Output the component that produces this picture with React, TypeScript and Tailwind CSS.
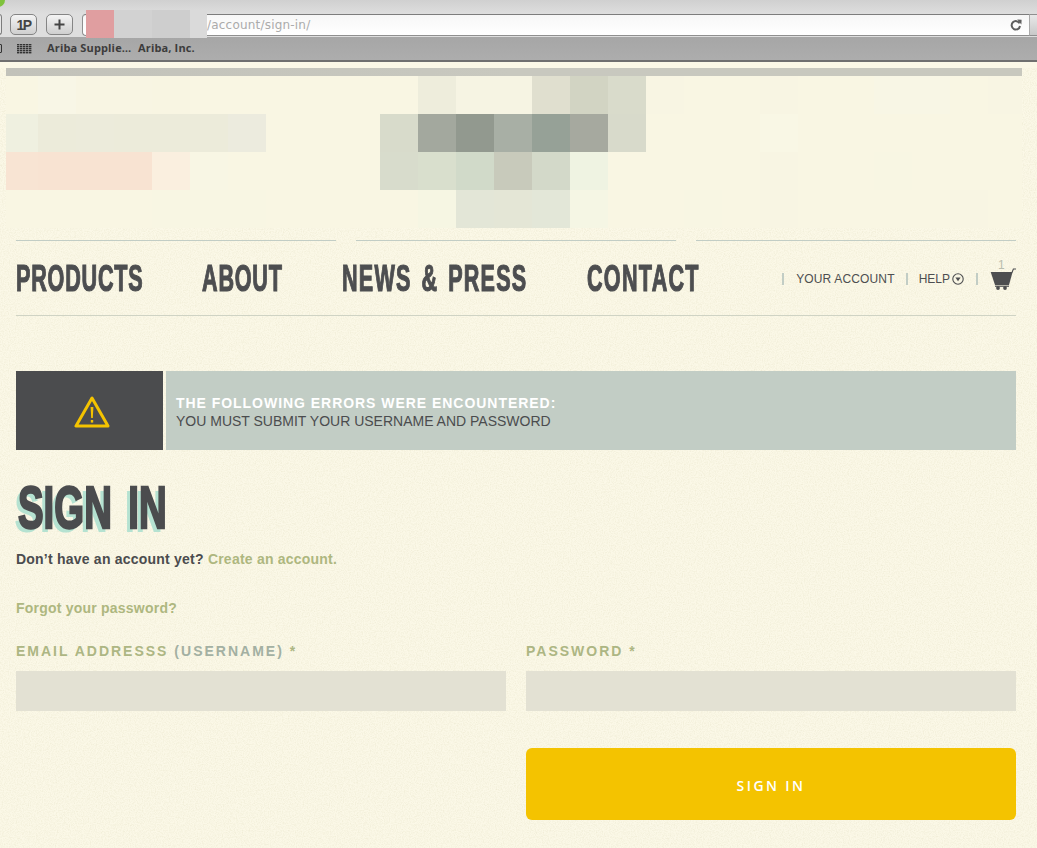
import React from "react";

const sans = "font-['Liberation_Sans',Arial,sans-serif]";
const base = "#f9f6e3";

// blurred header image, one row of 38px cells each (index = column)
const mosaic: Record<number, string>[] = [
    { 1: "#f8f6e6", 2: "#f8f5e3", 3: "#f8f5e3", 4: "#f8f5e2", 11: "#eeeddc", 12: "#f6f4e3", 13: "#f6f4e3", 14: "#e0dfcf", 15: "#d2d4c3", 16: "#d9dbcb", 17: "#f8f5e3", 20: "#f8f5e3", 23: "#f8f6e5", 24: "#f8f6e5", 26: "#f8f5e3" },
    { 0: "#eff0e0", 1: "#ecebda", 2: "#ecebdb", 3: "#ecebda", 4: "#ecebda", 5: "#ecebda", 6: "#ecebde", 10: "#d8dbcb", 11: "#a3a89e", 12: "#92998f", 13: "#a8afa5", 14: "#96a197", 15: "#a6a99f", 16: "#d8dacb", 20: "#f9f7e5" },
    { 0: "#f8e4d3", 1: "#f8e3d2", 2: "#f8e3d2", 3: "#f8e3d2", 4: "#faefdf", 5: "#f8f6e4", 10: "#d8dccc", 11: "#d9dfcd", 12: "#d1dac9", 13: "#c8cabb", 14: "#d3d9c9", 15: "#eff3e2", 20: "#f8f5e3", 23: "#f8f6e3" },
    { 4: "#f8f6e3", 5: "#f8f6e3", 6: "#f8f6e3", 11: "#f6f6e3", 12: "#e3e6d7", 13: "#e4e6d6", 14: "#e3e7d8", 15: "#f5f6e4", 18: "#f8f6e3", 20: "#f8f5e3", 25: "#f8f5e3" },
];

const navItems = [
    { label: "PRODUCTS", className: "w-[127px] tracking-[1.3px]" },
    { label: "ABOUT", className: "w-[81px] tracking-[1.3px]" },
    { label: "NEWS & PRESS", className: "w-[186px] tracking-[2px] [word-spacing:4.5px]" },
    { label: "CONTACT", className: "w-[113px] tracking-[2.1px]" },
];

function Separator() {
    return <span className="block w-[2px] h-[12px] bg-[#c2cdc5]" />;
}

function Browser() {
    return (
        <div className="relative h-[62px] overflow-hidden border-b-2 border-[#6f6f6f]">
            <div className="absolute left-[-9px] top-[-7px] w-[14px] h-[14px] rounded-full bg-[#7fc23c]" />
            <div className="h-[14px] bg-gradient-to-b from-[#d0d0d0] to-[#dedede]" />
            <div className="flex h-[23px] bg-[#dedede]">
                <div className="w-[3px] h-[21px] -ml-[1px] rounded-r-[3px] border border-[#7d7d7d] bg-[#e6e6e6]" />
                <div className="ml-[8px] w-[27px] h-[21px] flex items-center justify-center rounded-[5px] border border-[#858585] bg-gradient-to-b from-[#f4f4f4] to-[#cfcfcf] text-[14px] leading-none font-bold text-[#444] font-['Liberation_Sans',sans-serif] tracking-[-1.5px]">
                    1P
                </div>
                <div className="ml-[9px] w-[27px] h-[21px] flex items-center justify-center rounded-[5px] border border-[#858585] bg-gradient-to-b from-[#f4f4f4] to-[#cfcfcf]">
                    <svg width="11" height="11" viewBox="0 0 11 11"><path d="M5.5 0.5v10M0.5 5.5h10" stroke="#444" strokeWidth="2" /></svg>
                </div>
                <div className="ml-[9px] flex-1 h-[22px] flex items-center justify-between pl-[124px] pr-[7px] rounded-l-[4px] border-y border-l border-t-[#7d7d7d] border-b-[#8f8f8f] border-l-[#8f8f8f] bg-gradient-to-b from-[#f7f7f7] to-white text-[12px] tracking-[0.2px] text-[#ababab] font-['DejaVu_Sans',sans-serif]">
                    <span>/account/sign-in/</span>
                    <svg width="12" height="12" viewBox="0 0 12 12" fill="none">
                        <path d="M9.6 4.4A4.2 4.2 0 1 0 10 7" stroke="#5e5e5e" strokeWidth="2" />
                        <path d="M7.2 0.6l4.4 0.2-0.2 4.6z" fill="#5e5e5e" />
                    </svg>
                </div>
                <div className="w-[8px] h-[22px] border-y border-y-[#8f8f8f] border-l border-l-[#aaa] bg-gradient-to-b from-[#e8e8e8] to-[#c9c9c9]" />
            </div>
            <div className="flex items-center h-[23px] bg-gradient-to-b from-[#a6a6a6] to-[#adadad] text-[11px] font-bold text-[#3c3c3c] font-['Open_Sans',sans-serif]">
                <div className="w-[3px] h-[9px] -ml-[1px] border border-[#333] rounded-r-[1px]" />
                <svg className="ml-[15px]" width="16" height="10" viewBox="0 0 16 10" fill="#333">
                    {[0, 2, 4, 6, 8].flatMap((y) => [0, 3, 6, 9, 12].map((x) => <rect key={`${x}-${y}`} x={x} y={y} width="2.4" height="1.4" />))}
                </svg>
                <span className="ml-[14px] w-[91px] whitespace-nowrap tracking-[0.15px]">Ariba Supplie…</span>
                <span className="whitespace-nowrap tracking-[0.15px]">Ariba, Inc.</span>
            </div>
            {/* blurred address */}
            <div className="absolute left-[86px] top-[10px] flex h-[28px]">
                <div className="w-[28px] bg-[#e09ea0]" />
                <div className="w-[38px] bg-[#d2d2d2]" />
                <div className="w-[38px] bg-[#cecece]" />
                <div className="w-[17px] bg-[#dadada]" />
            </div>
        </div>
    );
}

function Hero() {
    return (
        <div className="mx-[6px] w-[1016px]">
            <div className="h-[8px] mt-[6px] bg-gradient-to-r from-[#c2c2ba] via-[#c8c8bf] to-[#c8c8be]" />
            <div className="grid grid-cols-[32px_repeat(26,38px)] grid-rows-[repeat(4,38px)] overflow-hidden">
                {mosaic.map((row, r) =>
                    Array.from({ length: 27 }, (_, c) => (
                        <div key={`${r}-${c}`} style={{ backgroundColor: row[c] ?? base }} />
                    ))
                )}
            </div>
        </div>
    );
}

function Nav() {
    return (
        <div className="mt-[12px] mx-[16px]">
            <div className="grid grid-cols-3 gap-[20px]">
                <div className="h-px bg-[#c2cdc5]" />
                <div className="h-px bg-[#c2cdc5]" />
                <div className="h-px bg-[#c2cdc5]" />
            </div>
            <div className="flex items-center justify-between h-[75px] pt-[1px] border-b border-[#cfd3c4]">
                <div className="flex gap-[59px]">
                    {navItems.map((item) => (
                        <a key={item.label} className={`${item.className} block whitespace-nowrap`}>
                            <span className={`inline-block origin-left scale-x-[0.6] text-[36px] leading-[40px] font-bold text-[#4d4e50] [-webkit-text-stroke:1.2px_#4d4e50] ${sans}`}>
                                {item.label}
                            </span>
                        </a>
                    ))}
                </div>
                <div className={`flex items-center text-[12px] text-[#4d4e50] ${sans}`}>
                    <Separator />
                    <span className="ml-[12px] tracking-[0.15px]">YOUR ACCOUNT</span>
                    <span className="ml-[11px]"><Separator /></span>
                    <span className="ml-[11px]">HELP</span>
                    <svg className="ml-[2px]" width="12" height="12" viewBox="0 0 12 12" fill="none">
                        <circle cx="6" cy="6" r="5.2" stroke="#4d4e50" strokeWidth="1.1" />
                        <path d="M3.4 4.6h5.2L6 8.2z" fill="#4d4e50" />
                    </svg>
                    <span className="ml-[12px]"><Separator /></span>
                    <div className="relative ml-[12px] w-[26px] h-[22px]">
                        <span className="absolute left-[8px] top-[-12px] text-[12px] text-[#b9bdae]">1</span>
                        <svg width="26" height="22" viewBox="0 0 26 22" fill="#4d4e50" className="absolute left-0 top-0">
                            <path d="M0.7 4H22.6L19 17H5z" />
                            <path d="M21.4 4.5 23 0.4H26V1.4H23.8L22.6 4.5z" />
                            <rect x="5" y="17.6" width="14" height="1.2" />
                            <circle cx="8" cy="20" r="1.9" />
                            <circle cx="15" cy="20" r="1.9" />
                        </svg>
                    </div>
                </div>
            </div>
        </div>
    );
}

function Alert() {
    return (
        <div className={`mt-[55px] mx-[16px] flex gap-[3px] h-[79px] ${sans}`}>
            <div className="w-[147px] flex items-center justify-center bg-[#4b4c4e]">
                <svg className="ml-[5px] mt-[2px]" width="36" height="32" viewBox="0 0 36 32" fill="none">
                    <path d="M18 2 2 30h32z" stroke="#f4c300" strokeWidth="3" strokeLinejoin="round" />
                    <path d="M16.6 11h2.8l-.6 11h-1.6z" fill="#f4c300" />
                    <rect x="16.8" y="24" width="2.4" height="2.6" fill="#f4c300" />
                </svg>
            </div>
            <div className="flex-1 flex flex-col justify-center pt-[3px] pl-[10px] bg-[#c2cdc5]">
                <div className="text-[14px] leading-[18px] font-bold tracking-[0.96px] text-white">THE FOLLOWING ERRORS WERE ENCOUNTERED:</div>
                <div className="text-[14px] leading-[18px] text-[#4b4c4e]">YOU MUST SUBMIT YOUR USERNAME AND PASSWORD</div>
            </div>
        </div>
    );
}

function SignInForm() {
    return (
        <div className={`mx-[16px] ${sans}`}>
            <h1 className="mt-[28px] h-[60px] w-[148px] whitespace-nowrap">
                <span className="inline-block origin-left scale-x-[0.64] ml-[2px] text-[60px] leading-[60px] font-bold text-[#4b4c4e] [word-spacing:9px] [-webkit-text-stroke:2.5px_#4b4c4e] [text-shadow:-6px_4px_0_#b5e2d1]">
                    SIGN IN
                </span>
            </h1>
            <p className="mt-[12px] text-[14px] leading-[18px] font-bold tracking-[0.22px] text-[#4b4c4e]">
                Don’t have an account yet? <a className="text-[#aeb77f]">Create an account.</a>
            </p>
            <p className="mt-[31px] text-[14px] leading-[18px] font-bold tracking-[0.22px] text-[#aeb77f]">Forgot your password?</p>
            <div className="mt-[25px] grid grid-cols-2 gap-x-[20px]">
                <div>
                    <label className="block text-[14px] leading-[18px] font-bold tracking-[2px] text-[#adb683]">
                        EMAIL ADDRESSS <span className="text-[#a3b0a2]">(USERNAME)</span> *
                    </label>
                    <input className="block mt-[11px] w-full h-[40px] bg-[#e3e1d3]" />
                </div>
                <div>
                    <label className="block text-[14px] leading-[18px] font-bold tracking-[2px] text-[#adb683]">PASSWORD *</label>
                    <input type="password" className="block mt-[11px] w-full h-[40px] bg-[#e3e1d3]" />
                    <button className="block mt-[37px] pt-[2px] w-full h-[72px] rounded-[6px] bg-[#f4c300] text-[14px] font-semibold tracking-[2.4px] text-white font-['Open_Sans',sans-serif]">
                        SIGN IN
                    </button>
                </div>
            </div>
        </div>
    );
}

export default function App(): React.JSX.Element {
    return (
        <div className="w-[1037px] h-[848px] overflow-hidden bg-[#fbf8e7]">
            <Browser />
            <div className="relative h-[786px]">
                {/* paper grain */}
                <svg className="absolute inset-0 w-full h-full pointer-events-none" aria-hidden="true">
                    <filter id="grain">
                        <feTurbulence type="fractalNoise" baseFrequency="0.85" numOctaves="2" seed="4" />
                        <feColorMatrix values="0 0 0 0 0.8  0 0 0 0 0.77  0 0 0 0 0.58  0 0 0 1 -0.38" />
                    </filter>
                    <rect width="100%" height="100%" filter="url(#grain)" />
                </svg>
                <div className="relative w-[1032px]">
                    <Hero />
                    <Nav />
                    <Alert />
                    <SignInForm />
                </div>
            </div>
        </div>
    );
}
